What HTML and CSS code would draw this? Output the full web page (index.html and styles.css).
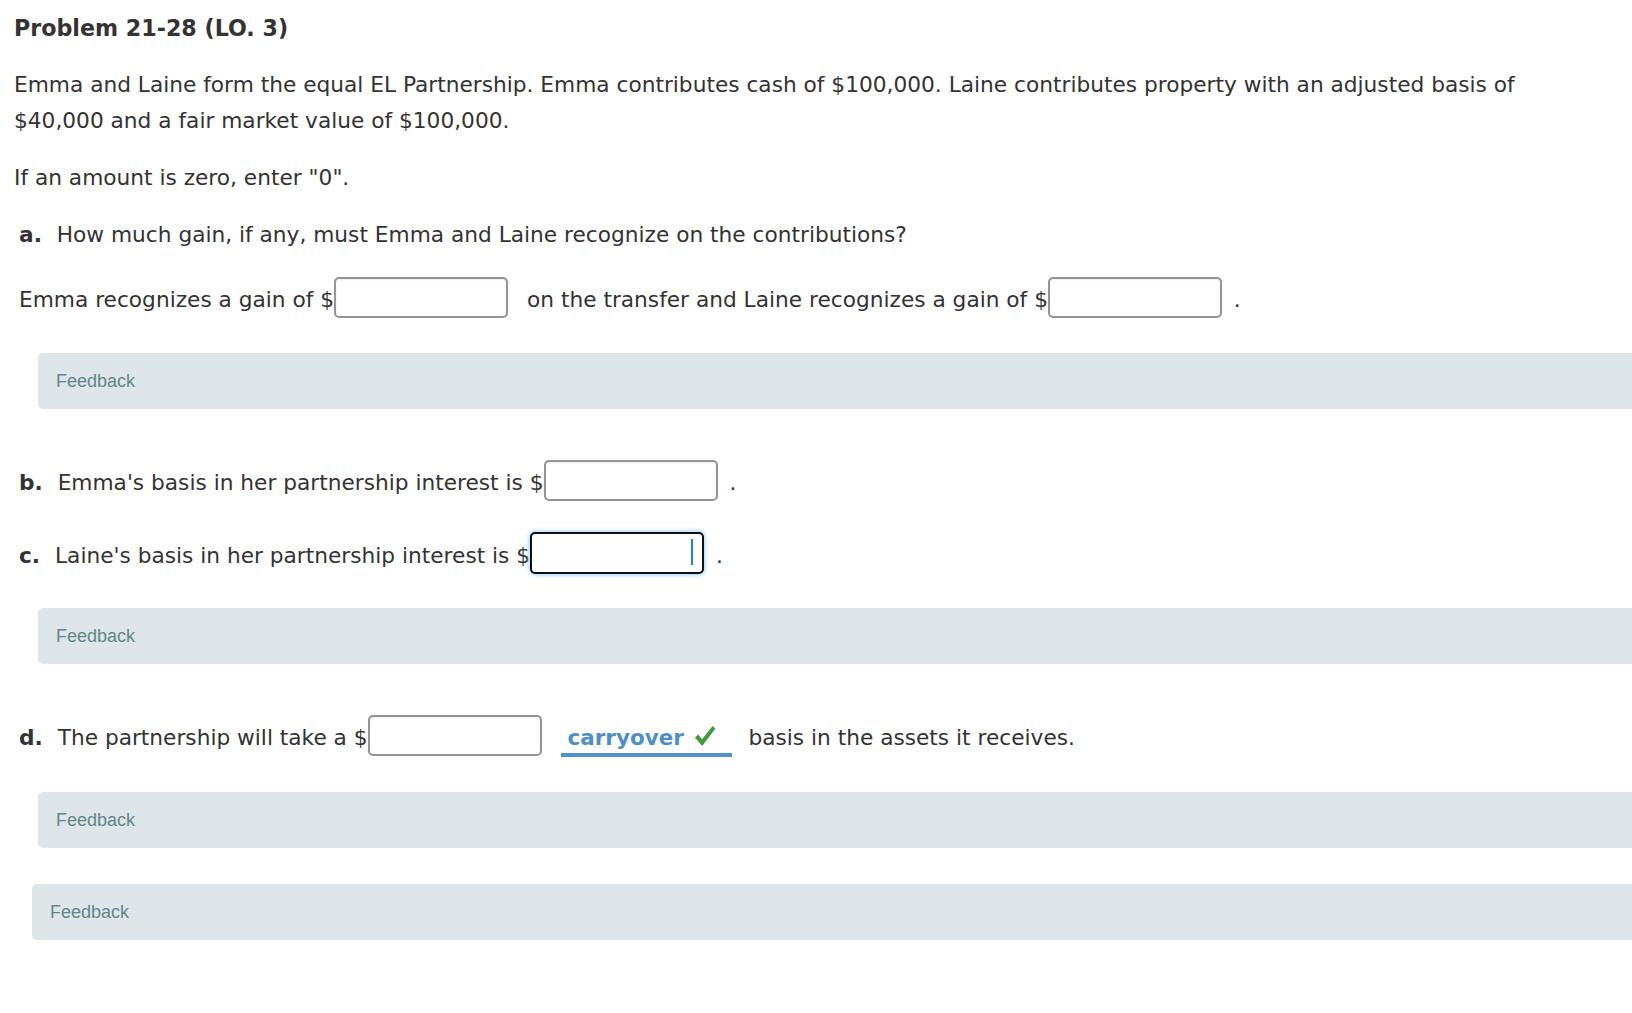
FILE: index.html
```html
<!DOCTYPE html>
<html lang="en">
<head>
<meta charset="utf-8">
<title>Problem 21-28 (LO. 3)</title>
<link rel="stylesheet" href="styles.css">
</head>
<body>
<div class="page">
  <h1 class="title">Problem 21-28 (LO. 3)</h1>
  <p class="para">Emma and Laine form the equal EL Partnership. Emma contributes cash of $100,000. Laine contributes property with an adjusted basis of $40,000 and a fair market value of $100,000.</p>
  <p class="note">If an amount is zero, enter "0".</p>

  <p class="q q-a"><b class="lbl">a.</b> How much gain, if any, must Emma and Laine recognize on the contributions?</p>
  <p class="row row-a">Emma recognizes a gain of $<span class="box"></span> <span class="gap">on the transfer and Laine recognizes a gain of $</span><span class="box"></span> .</p>
  <div class="fb fb-1">Feedback</div>

  <p class="row row-b"><b class="lbl">b.</b> Emma's basis in her partnership interest is $<span class="box"></span> .</p>
  <p class="row row-c"><b class="lbl">c.</b> Laine's basis in her partnership interest is $<span class="box box-focus"><span class="caret"></span></span> .</p>
  <div class="fb fb-2">Feedback</div>

  <p class="row row-d"><b class="lbl">d.</b> The partnership will take a $<span class="box"></span> <span class="select"><span class="select-text">carryover</span><svg class="check" width="22" height="22" viewBox="0 0 22 22"><path d="M1 12.5 L4.2 9.6 L8 14.2 L18.6 1 L21.4 3.6 L8.2 21 Z" fill="#3f9c3f"/></svg></span> basis in the assets it receives.</p>
  <div class="fb fb-3">Feedback</div>

  <div class="fb fb-4">Feedback</div>
</div>
</body>
</html>
```

FILE: styles.css
```css
html, body {
  margin: 0;
  padding: 0;
  background: #ffffff;
  overflow: hidden;
}

.page {
  padding: 10px 0 40px 14px;
  font-family: "DejaVu Sans", Verdana, sans-serif;
  font-size: 21.7px;
  line-height: 36px;
  color: #333333;
}

.title {
  margin: 0;
  font-size: 22.2px;
  font-weight: bold;
  line-height: 36px;
}

.para {
  margin: 21px 0 0 0;
  max-width: 1575px;
}

.note {
  margin: 21px 0 0 0;
}

.q {
  margin: 21px 0 0 5px;
}

.lbl {
  font-weight: bold;
  padding-right: 8px;
}

.row {
  margin: 0 0 0 5px;
  white-space: nowrap;
}

.row-a { margin-top: 24px; }
.row-b { margin-top: 51px; }
.row-c { margin-top: 31px; }
.row-d { margin-top: 51px; }

.box {
  display: inline-block;
  box-sizing: border-box;
  width: 174px;
  height: 41px;
  overflow: hidden;
  border: 2px solid #949494;
  border-radius: 5px;
  background: #ffffff;
  box-shadow: inset 0 1px 2px rgba(0, 0, 0, 0.08);
  vertical-align: -11px;
  margin-right: 5px;
}

.box-focus {
  height: 42px;
  border-color: #111111;
  box-shadow: 0 0 4px 1px #9fd3f3;
}

.caret {
  display: block;
  width: 2px;
  height: 26px;
  margin: 5px 9px 0 auto;
  background: #1a86d0;
}

.gap {
  margin-left: 7px;
}

.select {
  display: inline-block;
  box-sizing: border-box;
  width: 171px;
  margin-left: 7px;
  margin-right: 10px;
  padding-left: 7px;
  line-height: 30px;
  border-bottom: 4px solid #5192c8;
}

.select-text {
  font-weight: bold;
  font-size: 21.5px;
  color: #4e8fc8;
}

.check {
  margin-left: 10px;
  vertical-align: -2px;
}

.fb {
  box-sizing: border-box;
  height: 56px;
  margin-right: -20px;
  padding-left: 18px;
  border-radius: 5px;
  background: #dfe6e9;
  font-family: "Liberation Sans", Arial, sans-serif;
  font-size: 18px;
  line-height: 56px;
  color: #5f8888;
}

.fb-1 { margin-left: 24px; margin-top: 35px; }
.fb-2 { margin-left: 24px; margin-top: 34px; }
.fb-3 { margin-left: 24px; margin-top: 35px; }
.fb-4 { margin-left: 18px; margin-top: 36px; }
```
